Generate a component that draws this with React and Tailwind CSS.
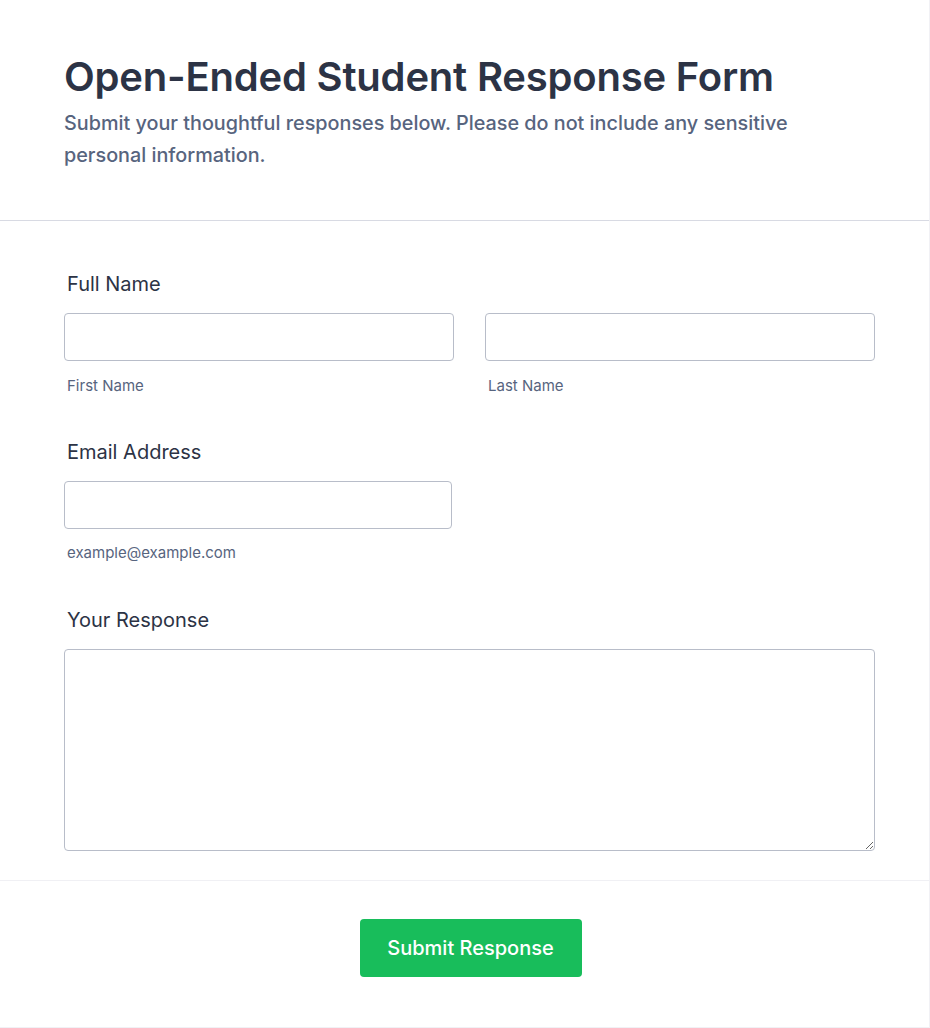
export default function App() {
  const font = { fontFamily: "Inter, 'Noto Sans', sans-serif" }
  return (
    <div className="w-[930px] h-[1028px] bg-white border-r border-b border-[#f1f1f5] text-[#2c3345]" style={font}>
      <div className="pl-16 pt-[53px] h-[221px] border-b border-[#d8dae3]">
        <h1 className="text-[40px] leading-[48px] font-semibold text-[#2c3345] tracking-[-0.2px]">Open-Ended Student Response Form</h1>
        <p className="mt-[6px] w-[745px] text-[19.8px] leading-8 font-medium text-[#57647e]">
          Submit your thoughtful responses below. Please do not include any sensitive personal information.
        </p>
      </div>

      <div className="pl-16 pt-[49px] h-[660px] border-b border-[#f0f0f4]">
        <div className="w-[811px]">
          <label className="block pl-[3px] text-xl leading-7 mb-[15px]">Full Name</label>
          <div className="flex gap-[31px]">
            <div className="flex-1">
              <input type="text" className="block w-full h-12 rounded border border-[#b8bdc9] bg-white" />
              <div className="pl-[3px] mt-[15px] text-[15px] leading-5 text-[#57647e]">First Name</div>
            </div>
            <div className="flex-1">
              <input type="text" className="block w-full h-12 rounded border border-[#b8bdc9] bg-white" />
              <div className="pl-[3px] mt-[15px] text-[15px] leading-5 text-[#57647e]">Last Name</div>
            </div>
          </div>

          <label className="block pl-[3px] mt-[42px] text-xl leading-7 mb-[15px]">Email Address</label>
          <input type="email" className="block w-[388px] h-12 rounded border border-[#b8bdc9] bg-white" />
          <div className="pl-[3px] mt-[14px] text-[15px] leading-5 text-[#57647e]">example@example.com</div>

          <label className="block pl-[3px] mt-[43px] text-xl leading-7 mb-[15px]">Your Response</label>
          <textarea className="block w-full h-[202px] rounded border border-[#b8bdc9] bg-white" />
        </div>
      </div>

      <div className="flex justify-center pt-[38px] pl-3">
        <button className="w-[222px] h-[58px] rounded bg-[#18bd5b] text-white text-xl font-medium">Submit Response</button>
      </div>
    </div>
  )
}
